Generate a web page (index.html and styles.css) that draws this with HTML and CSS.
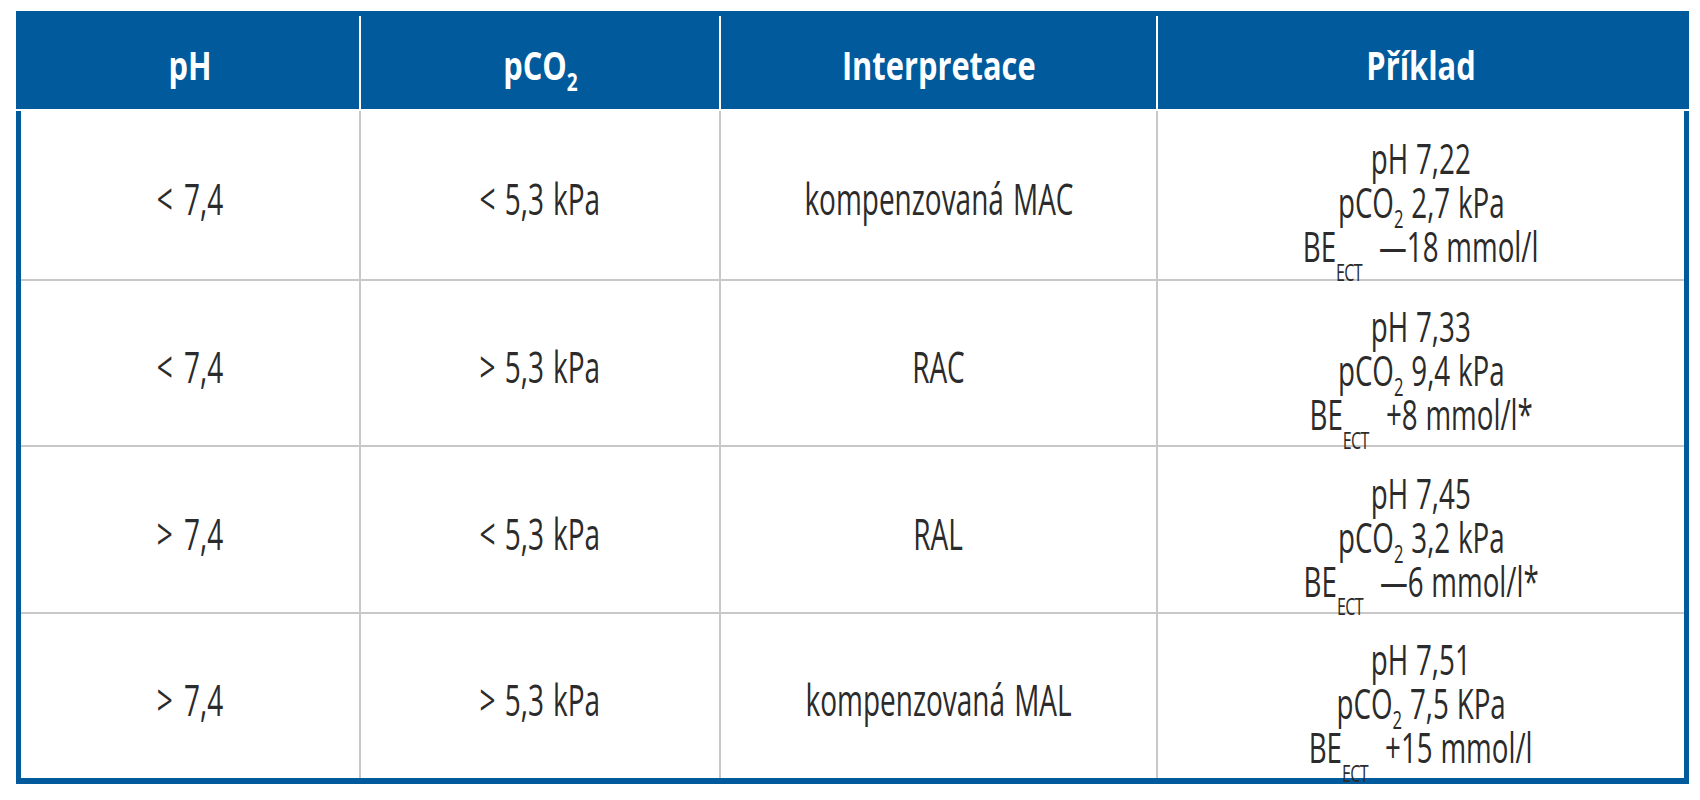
FILE: index.html
```html
<!DOCTYPE html>
<html lang="cs">
<head>
<meta charset="utf-8">
<title>Tabulka</title>
<link rel="stylesheet" href="styles.css">
</head>
<body>
<div class="page">
  <div class="tbl">
    <div class="head">
      <div class="hc first"><span class="t">pH</span></div>
      <div class="hc"><span class="t">pCO<sub>2</sub></span></div>
      <div class="hc"><span class="t">Interpretace</span></div>
      <div class="hc"><span class="t">Příklad</span></div>
    </div>
    <div class="row r1">
      <div class="c first"><span class="t">&lt; 7,4</span></div>
      <div class="c"><span class="t">&lt; 5,3 kPa</span></div>
      <div class="c"><span class="t">kompenzovaná MAC</span></div>
      <div class="c ex"><span class="t">pH 7,22</span><span class="t">pCO<sub>2</sub> 2,7 kPa</span><span class="t">BE<sub class="s">ECT</sub> —18 mmol/l</span></div>
    </div>
    <div class="row r2">
      <div class="c first"><span class="t">&lt; 7,4</span></div>
      <div class="c"><span class="t">&gt; 5,3 kPa</span></div>
      <div class="c"><span class="t">RAC</span></div>
      <div class="c ex"><span class="t">pH 7,33</span><span class="t">pCO<sub>2</sub> 9,4 kPa</span><span class="t">BE<sub class="s">ECT</sub> +8 mmol/l*</span></div>
    </div>
    <div class="row r3">
      <div class="c first"><span class="t">&gt; 7,4</span></div>
      <div class="c"><span class="t">&lt; 5,3 kPa</span></div>
      <div class="c"><span class="t">RAL</span></div>
      <div class="c ex"><span class="t">pH 7,45</span><span class="t">pCO<sub>2</sub> 3,2 kPa</span><span class="t">BE<sub class="s">ECT</sub> —6 mmol/l*</span></div>
    </div>
    <div class="row r4">
      <div class="c first"><span class="t">&gt; 7,4</span></div>
      <div class="c"><span class="t">&gt; 5,3 kPa</span></div>
      <div class="c"><span class="t">kompenzovaná MAL</span></div>
      <div class="c ex"><span class="t">pH 7,51</span><span class="t">pCO<sub>2</sub> 7,5 KPa</span><span class="t">BE<sub class="s">ECT</sub> +15 mmol/l</span></div>
    </div>
  </div>
</div>
</body>
</html>
```
FILE: styles.css
```css
html, body {
  margin: 0;
  padding: 0;
  background: #ffffff;
}

.page {
  width: 1700px;
  height: 800px;
  padding: 11px 0 0 16px;
  box-sizing: border-box;
  font-family: "Open Sans", "Noto Sans", "DejaVu Sans", sans-serif;
}

.tbl {
  width: 1673px;
  border-left: 5px solid #005a9c;
  border-right: 5px solid #005a9c;
  border-bottom: 6px solid #005a9c;
  box-sizing: border-box;
}

.head,
.row {
  display: grid;
  grid-template-columns: 338px 360px 437px 1fr;
}

.head {
  background: #005a9c;
  height: 100px;
  box-sizing: border-box;
  padding: 5px 5px 0 5px;
  margin: 0 -5px;
  border-bottom: 2px solid #ffffff;
}

.hc {
  display: flex;
  align-items: center;
  justify-content: center;
  color: #ffffff;
  font-weight: 700;
  font-size: 40px;
  line-height: 40px;
  border-left: 2px solid #ffffff;
  padding-top: 4px;
}

.hc.first {
  border-left: 0;
}

.t {
  display: inline-block;
  white-space: nowrap;
  transform: scaleX(0.65);
}

.hc .t {
  transform: scaleX(0.77);
}

.hc sub {
  font-size: 62%;
  line-height: 0;
  vertical-align: -0.45em;
}

.row {
  box-sizing: border-box;
  border-top: 2px solid #c8c8c8;
}

.r1 {
  border-top: 0;
  height: 168px;
}

.r2 {
  height: 166px;
}

.r3 {
  height: 167px;
}

.r4 {
  height: 166px;
}

.c {
  display: flex;
  align-items: center;
  justify-content: center;
  color: #2b2b2b;
  font-size: 43px;
  line-height: 44px;
  word-spacing: 3px;
  border-left: 2px solid #c8c8c8;
  padding-top: 8px;
}

.c.first {
  border-left: 0;
  word-spacing: 6px;
}

.c.ex {
  flex-direction: column;
  font-size: 42px;
  padding-top: 18px;
  word-spacing: 1px;
}

.c.ex .t {
  transform: scaleX(0.66);
}

.c sub {
  font-size: 60%;
  line-height: 0;
  vertical-align: -0.4em;
}

.c sub.s {
  font-size: 58%;
  vertical-align: -0.75em;
  margin-right: 14px;
  letter-spacing: -1px;
}
```
